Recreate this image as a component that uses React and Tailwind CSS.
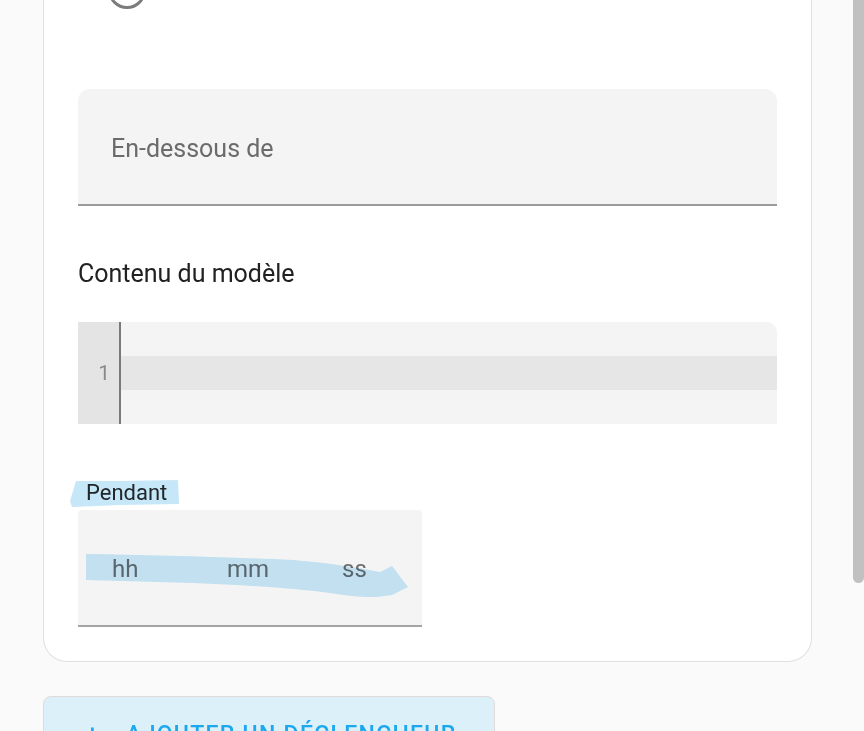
import { memo } from "react";

const FONT = { fontFamily: "Roboto, 'Noto Sans', sans-serif" };

// Hand-drawn marker strokes laid over the form (annotation layer).
function Highlights() {
  return (
    <svg
      className="pointer-events-none absolute left-0 top-0 mix-blend-multiply"
      width="864"
      height="731"
      aria-hidden="true"
    >
      <polygon
        fill="#c6e7f8"
        points="76,481 120,481 178,480 179,504 120,505 72,507 70,501"
      />
      <path
        fill="#cbebfb"
        d="M86,554 C150,555 230,557 293,560 C330,563 360,568 380,572 L392,566 L408,587 L392,595 C375,598 360,598 330,593 C300,589 250,585 193,583 L86,580 Z"
      />
    </svg>
  );
}

function FilledField({ label }) {
  return (
    <div className="flex h-[117px] items-center rounded-t-[12px] border-b-2 border-[#9b9b9b] bg-[#f4f4f4] pl-[33px] pt-[4px]">
      <span className="text-[25px] text-[#6b6b6b]">{label}</span>
    </div>
  );
}

function CodeEditor() {
  return (
    <div className="flex h-[102px] overflow-hidden rounded-tr-[10px] bg-[#f4f4f4]">
      <div className="flex w-[43px] shrink-0 flex-col justify-center border-r-2 border-[#7a7a7a] bg-[#e4e4e4]">
        <span className="pr-[9px] text-right text-[21px] leading-[34px] text-[#8a8a8a]">1</span>
      </div>
      <div className="flex flex-1 flex-col justify-center">
        <div className="h-[34px] bg-[#e6e6e6]" />
      </div>
    </div>
  );
}

function DurationField() {
  return (
    <div className="flex h-[117px] w-[344px] items-center rounded-t-[4px] border-b-2 border-[#a4a4a4] bg-[#f4f4f4] pt-[2px] text-[24px] text-[#6f6f6f]">
      <span className="ml-[34px] w-[115px]">hh</span>
      <span className="w-[115px]">mm</span>
      <span>ss</span>
    </div>
  );
}

function App() {
  return (
    <div className="relative flex h-[731px] w-[864px] overflow-hidden bg-[#fafafa]" style={FONT}>
      <main className="flex-1 overflow-hidden pl-[43px]">
        <div className="-mt-[62px] flex w-[769px] flex-col rounded-b-[24px] border border-t-0 border-[#e0e0e0] bg-white px-[34px] pb-[34px]">
          <div className="flex items-center gap-[18px] pl-[30px] pt-[33px]">
            <span className="h-[38px] w-[38px] rounded-full border-[3px] border-[#7c7c7c]" />
            <span className="text-[25px] leading-[26px] text-[#212121] -translate-y-[12px]">
              Attribut ou état principal
            </span>
          </div>

          <div className="mt-[80px]">
            <FilledField label="En-dessous de" />
          </div>

          <h3 className="mt-[55px] text-[25px] leading-[26px] text-[#212121]">Contenu du modèle</h3>

          <div className="mt-[35px]">
            <CodeEditor />
          </div>

          <div className="mt-[58px] pl-[8px] text-[22px] leading-[22px] text-[#2a2a2a]">Pendant</div>

          <div className="mt-[6px]">
            <DurationField />
          </div>
        </div>

        <button
          type="button"
          className="mt-[34px] flex h-[60px] w-[452px] items-start gap-[26px] rounded-[8px] border border-[#e2dada] bg-[#dcf0fa] pl-[42px] pt-[21px] text-[23px] font-medium uppercase tracking-[1.3px] text-[#1ba8ee]"
        >
          <span>+</span>
          <span>Ajouter un déclencheur</span>
        </button>
      </main>

      <div className="w-[11px] shrink-0">
        <div className="h-[583px] rounded-b-[6px] bg-[#c1c1c1]" />
      </div>

      <Highlights />
    </div>
  );
}

export default memo(App);
